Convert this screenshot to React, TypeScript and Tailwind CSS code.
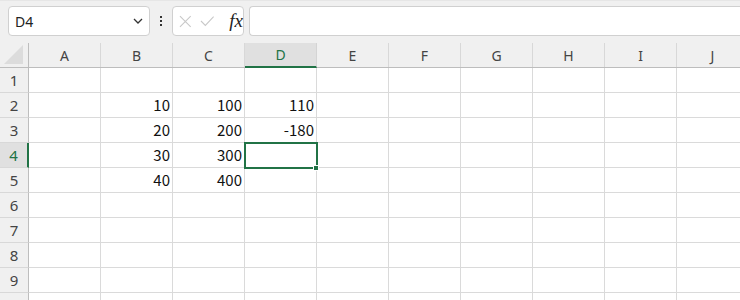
import React from "react";

const cols = ["A", "B", "C", "D", "E", "F", "G", "H", "I", "J"];
const data: Record<string, string> = {
  B2: "10", C2: "100", D2: "110",
  B3: "20", C3: "200", D3: "-180",
  B4: "30", C4: "300",
  B5: "40", C5: "400",
};
const rows = [1, 2, 3, 4, 5, 6, 7, 8, 9, 10];

export default function App() {
  return (
    <div
      className="w-[740px] h-[300px] overflow-hidden bg-[#f0f0f0] relative"
      style={{ fontFamily: '"Noto Sans", "Liberation Sans", sans-serif' }}
    >
      {/* Toolbar */}
      <div className="h-[43px] flex items-start pt-[5px] border-t border-[#e6e6e6]">
        <div className="ml-[8px] w-[142px] h-[30px] rounded-[4px] border border-[#d0d0d0] bg-white flex items-center justify-between pl-[6px] pr-[6px]">
          <span className="text-[14px] text-[#222]">D4</span>
          <svg width="10" height="6" viewBox="0 0 10 6">
            <path d="M1 1 L5 5 L9 1" fill="none" stroke="#333" strokeWidth="1.3" />
          </svg>
        </div>
        <div className="w-[22px] h-[30px] flex flex-col items-center justify-center gap-[2px]">
          <div className="w-[2px] h-[2px] bg-[#333]" />
          <div className="w-[2px] h-[2px] bg-[#333]" />
          <div className="w-[2px] h-[2px] bg-[#333]" />
        </div>
        <div className="w-[72px] h-[30px] rounded-[4px] border border-[#d0d0d0] bg-white flex items-center pl-[6px] gap-[8px]">
          <svg width="13" height="13" viewBox="0 0 13 13">
            <path d="M1 1 L12 12 M12 1 L1 12" stroke="#c8c8c8" strokeWidth="1.1" fill="none" />
          </svg>
          <svg width="15" height="12" viewBox="0 0 15 12">
            <path d="M1 6 L5.5 10.5 L14 1.5" stroke="#c8c8c8" strokeWidth="1.1" fill="none" />
          </svg>
          <span
            className="text-[19px] italic text-[#222] leading-none ml-[7px] -mt-[2px]"
            style={{ fontFamily: '"Liberation Serif", serif' }}
          >
            fx
          </span>
        </div>
        <div className="ml-[5px] flex-1 h-[30px] rounded-l-[4px] border border-r-0 border-[#d0d0d0] bg-white" />
      </div>

      {/* Grid */}
      <div className="relative">
        {/* Header row */}
        <div className="flex h-[25px] border-b border-[#bdbdbd]">
          <div className="w-[29px] shrink-0 border-r border-[#bdbdbd] flex items-end justify-end pr-[5px] pb-[3px]">
            <svg width="19" height="19" viewBox="0 0 19 19">
              <path d="M19 0 L19 19 L0 19 Z" fill="#dcdcdc" />
            </svg>
          </div>
          {cols.map((c) => (
            <div
              key={c}
              className={
                c === "D"
                  ? "w-[72px] shrink-0 bg-[#e0e0e0] border-r border-[#d4d4d4] border-b-2 border-b-[#217346] -mb-px flex items-center justify-center text-[14px] text-[#217346]"
                  : "w-[72px] shrink-0 border-r border-[#d8d8d8] flex items-center justify-center text-[14px] text-[#444]"
              }
            >
              {c}
            </div>
          ))}
        </div>
        {/* Rows */}
        {rows.map((r) => (
          <div key={r} className="flex h-[25px]">
            <div
              className={
                r === 4
                  ? "w-[29px] shrink-0 bg-[#e0e0e0] border-r-2 border-[#217346] border-b border-b-[#d8d8d8] flex items-center justify-center text-[15px] text-[#217346]"
                  : "w-[29px] shrink-0 border-r border-[#bdbdbd] border-b border-b-[#d8d8d8] flex items-center justify-center text-[15px] text-[#444]"
              }
            >
              {r}
            </div>
            {cols.map((c) => (
              <div
                key={c}
                className="w-[72px] shrink-0 bg-white border-r border-b border-[#dadada] flex items-center justify-end pr-[2px] text-[15px] text-[#111]"
                style={{ fontFamily: '"Noto Sans CJK JP", "Noto Sans", sans-serif' }}
              >
                {data[c + r] ?? ""}
              </div>
            ))}
          </div>
        ))}
        {/* Selection */}
        <div className="absolute left-[244px] top-[99px] w-[74px] h-[27px] border-2 border-[#217346]" />
        <div className="absolute left-[313px] top-[122px] w-[6px] h-[6px] bg-[#217346] border border-white" />
      </div>
    </div>
  );
}
